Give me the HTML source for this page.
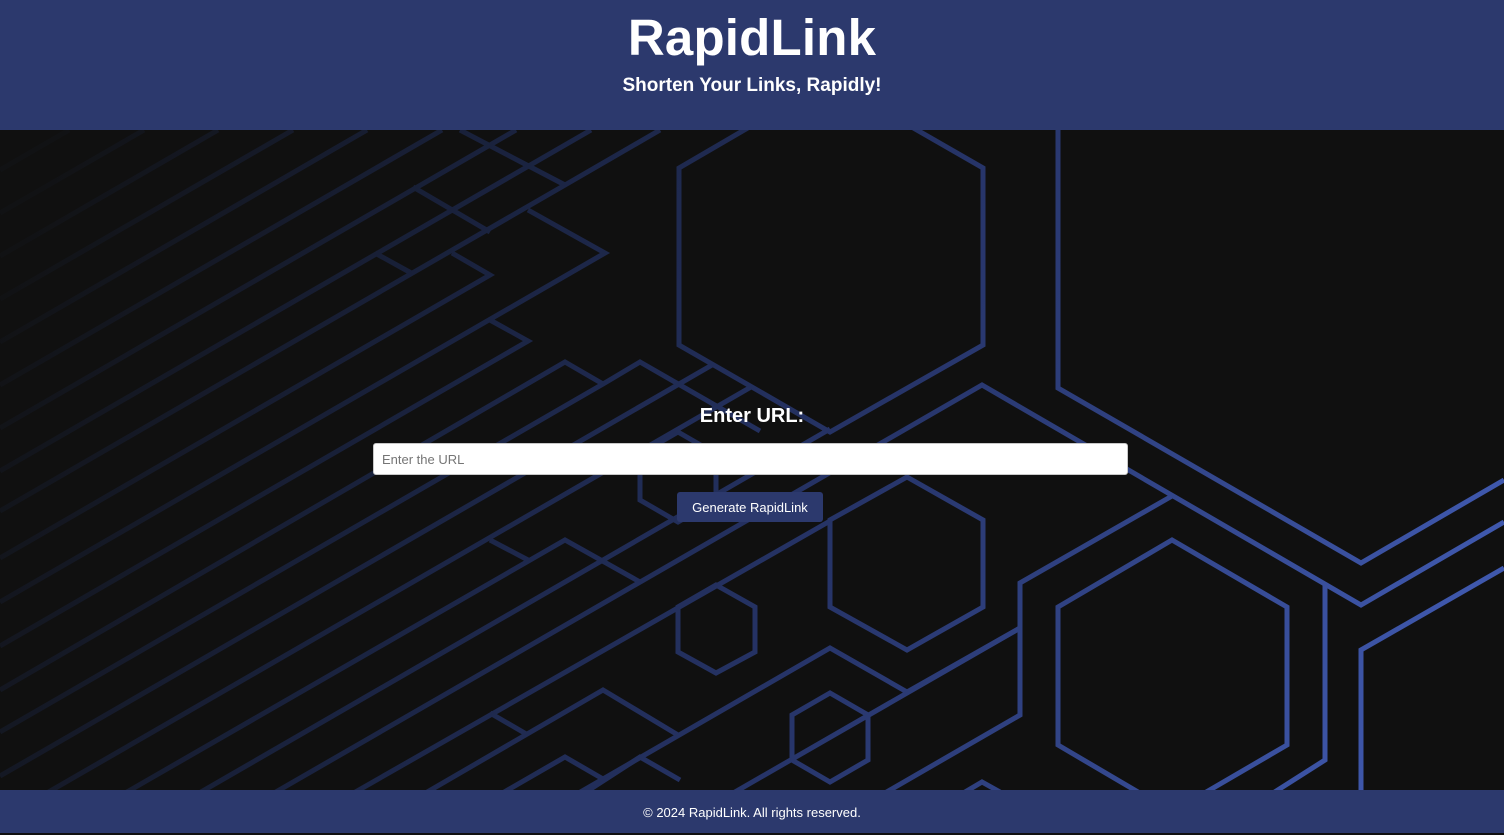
<!DOCTYPE html>
<html><head><meta charset="utf-8"><style>
*{margin:0;padding:0;box-sizing:border-box}
html,body{width:1504px;height:833px;overflow:hidden;background:#101010;font-family:"Liberation Sans",Arial,sans-serif}
header{position:absolute;left:0;top:0;width:1504px;height:130px;background:#2c396d;color:#fff;text-align:center}
h1{position:absolute;left:0;right:0;top:10px;font-size:51px;font-weight:bold;line-height:56px;letter-spacing:0.2px}
.sub{position:absolute;left:0;right:0;top:74px;font-size:19px;font-weight:bold;line-height:24px}
svg.bg{position:absolute;left:0;top:130px;display:block}
.lbl{position:absolute;left:0;right:0;top:404px;text-align:center;color:#fff;font-weight:bold;font-size:20px;line-height:24px}
.inp{position:absolute;left:373px;top:443px;width:755px;height:32px;background:#fff;border:1px solid #c8c8c8;border-radius:3px;font-size:13px;color:#757575;padding:8px 0 0 8px;line-height:15px}
.btn{position:absolute;left:677px;top:492px;width:146px;height:30px;background:#2c396d;border-radius:3px;color:#fff;font-size:13px;line-height:31px;text-align:center}
footer{position:absolute;left:0;top:790px;width:1504px;height:43px;background:#2c396d;color:#fff;font-size:13px;text-align:center;line-height:45px}
</style></head><body>
<header><h1>RapidLink</h1><div class="sub">Shorten Your Links, Rapidly!</div></header>
<svg class="bg" width="1504" height="660" viewBox="0 130 1504 660">
<defs>
<linearGradient id="g" gradientUnits="userSpaceOnUse" x1="0" y1="300" x2="1400" y2="790">
<stop offset="0" stop-color="#111214"/>
<stop offset="0.3" stop-color="#1a2340"/>
<stop offset="0.6" stop-color="#27356a"/>
<stop offset="1" stop-color="#3f58ad"/>
</linearGradient>
</defs>
<g fill="none" stroke="url(#g)" stroke-width="5" stroke-linejoin="miter">
<line x1="0" y1="170" x2="69" y2="130"/>
<line x1="0" y1="213" x2="144" y2="130"/>
<line x1="0" y1="256" x2="218" y2="130"/>
<line x1="0" y1="299" x2="293" y2="130"/>
<line x1="0" y1="342" x2="367" y2="130"/>
<line x1="0" y1="385" x2="442" y2="130"/>
<line x1="0" y1="428" x2="516" y2="130"/>
<line x1="0" y1="471" x2="591" y2="130"/>
<polyline points="0,511 565,185 660,130"/>
<polyline points="460,130 565,185"/>
<polyline points="413,187 490,232"/>
<polyline points="375,253 413,274"/>
<polyline points="0,558 490,275 452,253"/>
<polyline points="0,602 605,253 528,210"/>
<polyline points="0,646 528,341 490,320"/>
<polyline points="0,690 565,362 603,384"/>
<polyline points="0,732 603,384 640,362 760,431"/>
<polyline points="0,776 712,365"/>
<polyline points="0,820 751,387"/>
<polyline points="0,865 565,540 640,582"/>
<polyline points="490,540 528,560"/>
<polyline points="0,908 830,429"/>
<polyline points="0,951 982,385 1361,605 1504,522"/>
<polyline points="0,995 830,521"/>
<polyline points="0,1040 603,690 678,735"/>
<polyline points="490,713 528,735"/>
<polyline points="0,1083 565,757 603,779"/>
<polyline points="0,1127 830,648 907,692 1020,628"/>
<polyline points="0,1172 640,757 680,780"/>
<polyline points="0,1215 1020,628"/>
<polyline points="0,1304 1020,715 1020,583 1172,496"/>
<polyline points="830,80 983,168 983,345 830,432 679,345 679,168 830,80"/>
<polyline points="1058,120 1058,388 1361,563 1504,480"/>
<polygon points="907,477 983,520 983,607 907,650 830,607 830,520"/>
<polygon points="678,432 716,454 716,500 678,522 640,500 640,454"/>
<polygon points="716,585 755,607 755,652 716,673 678,652 678,607"/>
<polygon points="830,693 868,715 868,760 830,782 792,760 792,715"/>
<polygon points="1172,540 1287,607 1287,745 1172,812 1058,745 1058,607"/>
<polyline points="1325,584 1325,760 1270,795"/>
<polyline points="1361,800 1361,650 1504,568"/>
<polyline points="960,795 982,782 1000,792"/>
</g>
</svg>
<div class="lbl">Enter URL:</div>
<div class="inp">Enter the URL</div>
<div class="btn">Generate RapidLink</div>
<footer>© 2024 RapidLink. All rights reserved.</footer>
</body></html>
